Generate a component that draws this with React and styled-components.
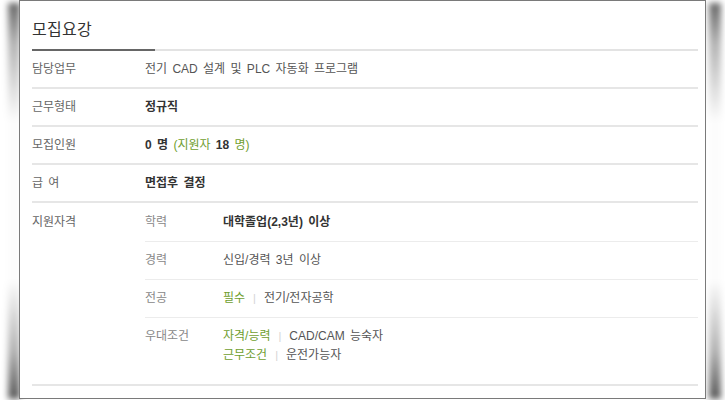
import React from "react";
import styled, { createGlobalStyle } from "styled-components";

const Global = createGlobalStyle`
  html, body { margin: 0; padding: 0; background: #fff; }
  body {
    font-family: "Liberation Sans", "Noto Sans CJK KR", sans-serif;
    font-size: 12px;
    color: #555;
    word-spacing: 2px;
  }
`;

const Stage = styled.div`
  position: relative;
  width: 725px;
  height: 400px;
  overflow: hidden;
`;

const Frame = styled.div`
  position: relative;
  margin-left: 19px;
  box-sizing: border-box;
  width: 687px;
  height: 399px;
  border: 1px solid #7a7a7a;
  background: #fff;
  padding: 0 7px 0 12px;
  z-index: 1;
`;

const Shadow = styled.div`
  position: absolute;
  top: 3px;
  bottom: 1px;
  width: 12px;
  ${(p) => (p.$side === "left" ? "left: 8px;" : "right: 4px;")}
  background: linear-gradient(
    to bottom,
    rgba(0, 0, 0, 0.6) 0%,
    rgba(0, 0, 0, 0.3) 10%,
    rgba(0, 0, 0, 0.01) 30%,
    rgba(0, 0, 0, 0.01) 70%,
    rgba(0, 0, 0, 0.3) 88%,
    rgba(0, 0, 0, 0.65) 100%
  );
  filter: blur(3px);
  z-index: 0;
`;

const Title = styled.h2`
  margin: 0;
  padding: 17px 0 0;
  height: 48px;
  box-sizing: border-box;
  font-family: "Noto Sans CJK KR", sans-serif;
  font-size: 16px;
  font-weight: 400;
  color: #333;
  letter-spacing: 0.3px;
  line-height: 21px;
`;

const TitleRule = styled.div`
  display: flex;
  height: 2px;
  background: #e3e3e3;
  &::before {
    content: "";
    width: 123px;
    background: #666;
  }
`;

const Row = styled.div`
  display: grid;
  grid-template-columns: 113px 1fr;
  border-bottom: 2px solid #e6e6e6;
  padding: ${(p) => (p.$compact ? "1px 0 9px" : "9px 0")};
  line-height: 18px;
`;

const Label = styled.div`
  color: #666;
  padding-top: ${(p) => (p.$inset ? "9px" : "0")};
`;

const Value = styled.div`
  color: ${(p) => (p.$strong ? "#333" : "#555")};
  font-weight: ${(p) => (p.$strong ? 700 : 400)};
`;

const Green = styled.span`
  color: #6f9e2f;
  font-weight: 400;
`;

const Num = styled.span`
  color: #333;
  font-weight: 700;
`;

const SubTable = styled.div`
  display: flex;
  flex-direction: column;
`;

const SubRow = styled.div`
  display: grid;
  grid-template-columns: 78px 1fr;
  padding: 9px 0 10px;
  border-bottom: ${(p) => (p.$last ? "none" : "1px solid #ececec")};
  line-height: ${(p) => (p.$last ? "19px" : "18px")};
`;

const SubLabel = styled.div`
  color: #888;
`;

const Line = styled.div`
  display: flex;
  align-items: center;
`;

const Sep = styled.span`
  color: #d4d4d4;
  margin: 0 8px;
  font-size: 11px;
`;

export default function App() {
  return (
    <>
      <Global />
      <Stage>
        <Shadow $side="left" />
        <Shadow $side="right" />
        <Frame>
          <Title>모집요강</Title>
          <TitleRule />
          <Row>
            <Label>담당업무</Label>
            <Value>전기 CAD 설계 및 PLC 자동화 프로그램</Value>
          </Row>
          <Row>
            <Label>근무형태</Label>
            <Value $strong>정규직</Value>
          </Row>
          <Row>
            <Label>모집인원</Label>
            <Value $strong>
              0 명 <Green>(지원자 </Green>
              <Num>18</Num>
              <Green> 명)</Green>
            </Value>
          </Row>
          <Row>
            <Label>급 여</Label>
            <Value $strong>면접후 결정</Value>
          </Row>
          <Row $compact>
            <Label $inset>지원자격</Label>
            <SubTable>
              <SubRow>
                <SubLabel>학력</SubLabel>
                <Value $strong>대학졸업(2,3년) 이상</Value>
              </SubRow>
              <SubRow>
                <SubLabel>경력</SubLabel>
                <Value>신입/경력 3년 이상</Value>
              </SubRow>
              <SubRow>
                <SubLabel>전공</SubLabel>
                <Line>
                  <Green>필수</Green>
                  <Sep>|</Sep>
                  <Value>전기/전자공학</Value>
                </Line>
              </SubRow>
              <SubRow $last>
                <SubLabel>우대조건</SubLabel>
                <div>
                  <Line>
                    <Green>자격/능력</Green>
                    <Sep>|</Sep>
                    <Value>CAD/CAM 능숙자</Value>
                  </Line>
                  <Line>
                    <Green>근무조건</Green>
                    <Sep>|</Sep>
                    <Value>운전가능자</Value>
                  </Line>
                </div>
              </SubRow>
            </SubTable>
          </Row>
        </Frame>
      </Stage>
    </>
  );
}
